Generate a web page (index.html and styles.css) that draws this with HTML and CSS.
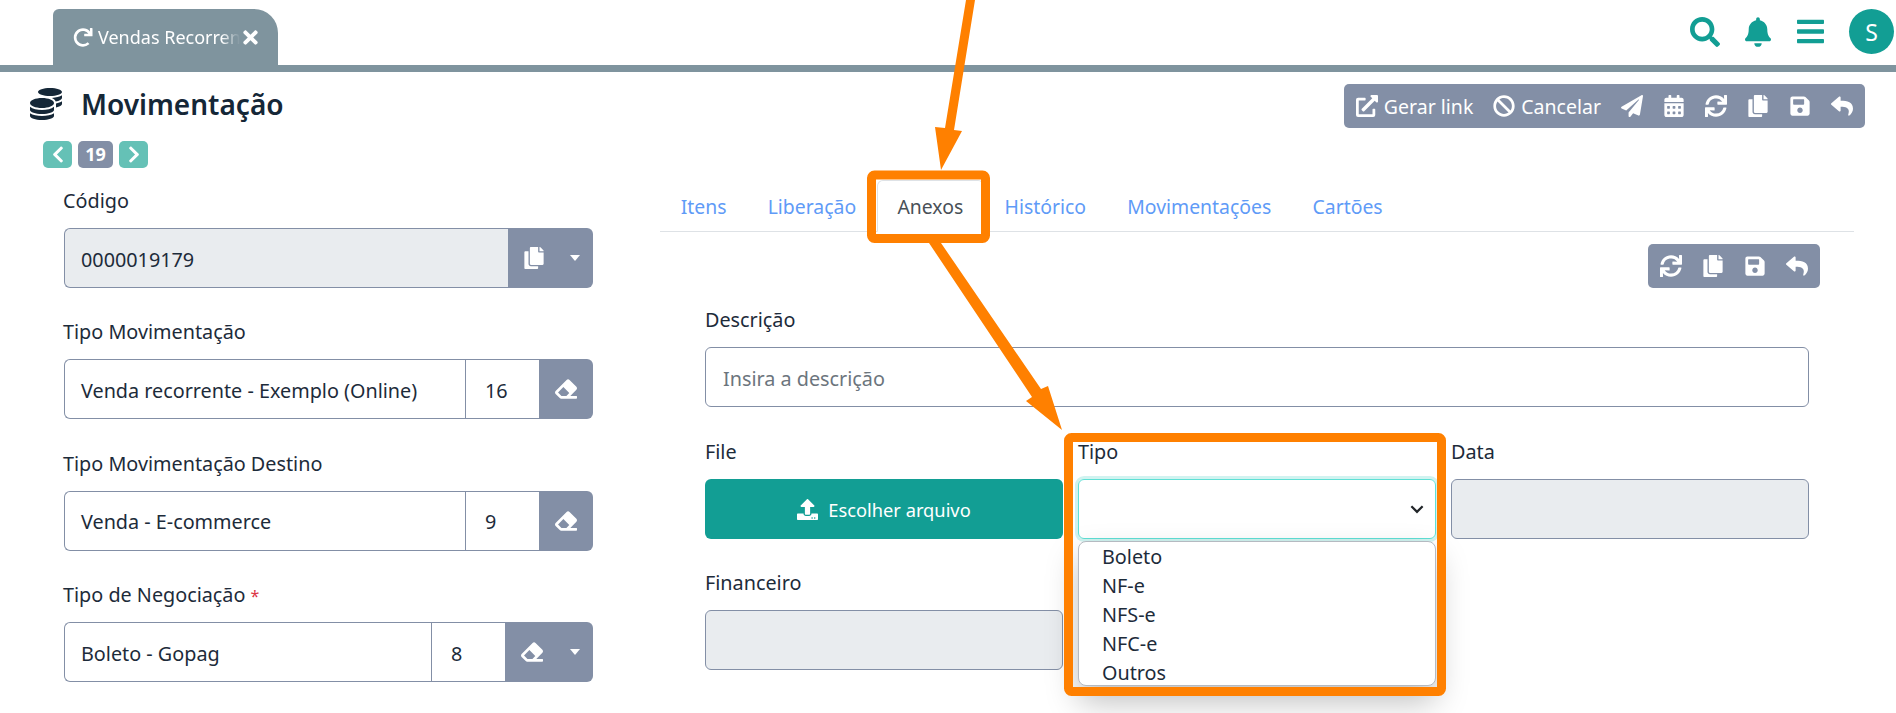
FILE: index.html
```html
<!DOCTYPE html>
<html lang="pt-BR">
<head>
    <meta charset="UTF-8">
    <title>Movimentação</title>
    <link rel="stylesheet" href="styles.css">
</head>
<body>
    <svg class="sprite" xmlns="http://www.w3.org/2000/svg">
        <symbol id="i-search" viewBox="0 0 512 512"><path d="M505 442.7L405.3 343c-4.5-4.5-10.6-7-17-7H372c27.6-35.3 44-79.7 44-128C416 93.1 322.9 0 208 0S0 93.1 0 208s93.1 208 208 208c48.3 0 92.7-16.4 128-44v16.3c0 6.4 2.5 12.5 7 17l99.7 99.7c9.4 9.4 24.6 9.4 33.9 0l28.3-28.3c9.4-9.4 9.4-24.6.1-34zM208 336c-70.7 0-128-57.2-128-128 0-70.7 57.2-128 128-128 70.7 0 128 57.2 128 128 0 70.7-57.2 128-128 128z"/></symbol>
        <symbol id="i-bell" viewBox="0 0 448 512"><path d="M224 512c35.32 0 63.97-28.65 63.97-64H160.03c0 35.35 28.65 64 63.97 64zm215.39-149.71c-19.32-20.76-55.47-51.99-55.47-154.29 0-77.7-54.48-139.9-127.94-155.16V32c0-17.67-14.32-32-31.98-32s-31.98 14.33-31.98 32v20.84C118.56 68.1 64.08 130.3 64.08 208c0 102.3-36.15 133.53-55.47 154.29-6 6.45-8.66 14.16-8.61 21.71.11 16.4 12.98 32 32.1 32h383.8c19.12 0 32-15.6 32.1-32 .05-7.55-2.61-15.27-8.61-21.71z"/></symbol>
        <symbol id="i-bars" viewBox="0 0 448 512"><path d="M16 132h416c8.837 0 16-7.163 16-16V76c0-8.837-7.163-16-16-16H16C7.163 60 0 67.163 0 76v40c0 8.837 7.163 16 16 16zm0 160h416c8.837 0 16-7.163 16-16v-40c0-8.837-7.163-16-16-16H16c-8.837 0-16 7.163-16 16v40c0 8.837 7.163 16 16 16zm0 160h416c8.837 0 16-7.163 16-16v-40c0-8.837-7.163-16-16-16H16c-8.837 0-16 7.163-16 16v40c0 8.837 7.163 16 16 16z"/></symbol>
        <symbol id="i-copy" viewBox="0 0 448 512"><path d="M320 448v40c0 13.255-10.745 24-24 24H24c-13.255 0-24-10.745-24-24V120c0-13.255 10.745-24 24-24h72v296c0 30.879 25.121 56 56 56h168zm0-344V0H152c-13.255 0-24 10.745-24 24v368c0 13.255 10.745 24 24 24h272c13.255 0 24-10.745 24-24V128H344c-13.2 0-24-10.8-24-24zm120.971-31.029L375.029 7.029A24 24 0 0 0 358.059 0H352v96h96v-6.059a24 24 0 0 0-7.029-16.97z"/></symbol>
        <symbol id="i-save" viewBox="0 0 448 512"><path d="M433.941 129.941l-83.882-83.882A48 48 0 0 0 316.118 32H48C21.49 32 0 53.49 0 80v352c0 26.51 21.49 48 48 48h352c26.51 0 48-21.49 48-48V163.882a48 48 0 0 0-14.059-33.941zM224 416c-35.346 0-64-28.654-64-64 0-35.346 28.654-64 64-64s64 28.654 64 64c0 35.346-28.654 64-64 64zm96-304.52V212c0 6.627-5.373 12-12 12H76c-6.627 0-12-5.373-12-12V108c0-6.627 5.373-12 12-12h228.52c3.183 0 6.235 1.264 8.485 3.515l3.48 3.48A11.996 11.996 0 0 1 320 111.48z"/></symbol>
        <symbol id="i-reply" viewBox="0 0 512 512"><path d="M8.309 189.836L184.313 37.851C199.719 24.546 224 35.347 224 56.015v80.053c160.629 1.839 288 34.032 288 186.258 0 61.441-39.581 122.309-83.333 154.132-13.653 9.931-33.111-2.533-28.077-18.631 45.344-145.012-21.507-183.51-176.59-185.742V360c0 20.7-24.3 31.453-39.687 18.164l-176.004-152c-11.071-9.562-11.086-26.753 0-36.328z"/></symbol>
        <symbol id="i-sync" viewBox="0 0 512 512"><path d="M440.65 12.57l4 82.77A247.16 247.16 0 0 0 255.83 8C134.73 8 33.91 94.92 12.29 209.82A12 12 0 0 0 24.09 224h49.05a12 12 0 0 0 11.67-9.26 175.91 175.91 0 0 1 317-56.94l-101.46-4.86a12 12 0 0 0-12.57 12v47.41a12 12 0 0 0 12 12H500a12 12 0 0 0 12-12V12a12 12 0 0 0-12-12h-47.37a12 12 0 0 0-11.98 12.57zM255.83 432a175.61 175.61 0 0 1-146-77.8l101.8 4.87a12 12 0 0 0 12.57-12v-47.4a12 12 0 0 0-12-12H12a12 12 0 0 0-12 12V500a12 12 0 0 0 12 12h47.35a12 12 0 0 0 12-12.6l-4.15-82.57A247.17 247.17 0 0 0 255.83 504c121.11 0 221.93-86.92 243.55-201.82a12 12 0 0 0-11.8-14.18h-49.05a12 12 0 0 0-11.67 9.26A175.86 175.86 0 0 1 255.83 432z"/></symbol>
        <symbol id="i-redo" viewBox="0 0 512 512"><path d="M500.33 0h-47.41a12 12 0 0 0-12 12.57l4 82.76A247.42 247.42 0 0 0 256 8C119.34 8 7.9 119.53 8 256.19 8.1 393.07 119.1 504 256 504a247.1 247.1 0 0 0 166.18-63.91 12 12 0 0 0 .48-17.43l-34-34a12 12 0 0 0-16.38-.55A176 176 0 1 1 402.1 157.8l-101.53-4.87a12 12 0 0 0-12.57 12v47.41a12 12 0 0 0 12 12h200.33a12 12 0 0 0 12-12V12a12 12 0 0 0-12-12z"/></symbol>
        <symbol id="i-times" viewBox="0 0 352 512"><path d="M242.72 256l100.07-100.07c12.28-12.28 12.28-32.19 0-44.48l-22.24-22.24c-12.28-12.28-32.19-12.28-44.48 0L176 189.28 75.93 89.21c-12.28-12.28-32.19-12.28-44.48 0L9.21 111.45c-12.28 12.28-12.28 32.19 0 44.48L109.28 256 9.21 356.07c-12.28 12.28-12.28 32.19 0 44.48l22.24 22.24c12.28 12.28 32.2 12.28 44.48 0L176 322.72l100.07 100.07c12.28 12.28 32.2 12.28 44.48 0l22.24-22.24c12.28-12.28 12.28-32.19 0-44.48L242.72 256z"/></symbol>
        <symbol id="i-plane" viewBox="0 0 512 512"><path d="M476 3.2L12.5 270.6c-18.1 10.4-15.8 35.6 2.2 43.2L121 358.4l287.3-253.2c5.5-4.9 13.3 2.6 8.6 8.3L176 407v80.5c0 23.6 28.5 32.9 42.5 15.8L282 426l124.6 52.2c14.2 6 30.4-2.9 33-18.2l72-432C515 7.8 493.3-6.8 476 3.2z"/></symbol>
        <symbol id="i-calendar" viewBox="0 0 448 512"><path d="M0 464c0 26.5 21.5 48 48 48h352c26.5 0 48-21.5 48-48V192H0v272zm320-196c0-6.6 5.4-12 12-12h40c6.6 0 12 5.4 12 12v40c0 6.6-5.4 12-12 12h-40c-6.6 0-12-5.4-12-12v-40zm0 128c0-6.6 5.4-12 12-12h40c6.6 0 12 5.4 12 12v40c0 6.6-5.4 12-12 12h-40c-6.6 0-12-5.4-12-12v-40zM192 268c0-6.6 5.4-12 12-12h40c6.6 0 12 5.4 12 12v40c0 6.6-5.4 12-12 12h-40c-6.6 0-12-5.4-12-12v-40zm0 128c0-6.6 5.4-12 12-12h40c6.6 0 12 5.4 12 12v40c0 6.6-5.4 12-12 12h-40c-6.6 0-12-5.4-12-12v-40zM64 268c0-6.6 5.4-12 12-12h40c6.6 0 12 5.4 12 12v40c0 6.6-5.4 12-12 12H76c-6.6 0-12-5.4-12-12v-40zm0 128c0-6.6 5.4-12 12-12h40c6.6 0 12 5.4 12 12v40c0 6.6-5.4 12-12 12H76c-6.6 0-12-5.4-12-12v-40zM400 64h-48V16c0-8.8-7.2-16-16-16h-32c-8.8 0-16 7.2-16 16v48H160V16c0-8.8-7.2-16-16-16h-32c-8.8 0-16 7.2-16 16v48H48C21.5 64 0 85.5 0 112v48h448v-48c0-26.5-21.5-48-48-48z"/></symbol>
        <symbol id="i-ban" viewBox="0 0 512 512"><path d="M256 8C119.034 8 8 119.033 8 256s111.034 248 248 248 248-111.034 248-248S392.967 8 256 8zm130.108 117.892c65.448 65.448 70 165.481 20.677 235.637L150.47 105.216c70.204-49.356 170.226-44.735 235.638 20.676zM125.892 386.108c-65.448-65.448-70-165.481-20.677-235.637L361.53 406.784c-70.203 49.356-170.226 44.736-235.638-20.676z"/></symbol>
        <symbol id="i-link" viewBox="0 0 512 512"><path d="M432 320h-32a16 16 0 0 0-16 16v112H64V128h144a16 16 0 0 0 16-16V80a16 16 0 0 0-16-16H48a48 48 0 0 0-48 48v352a48 48 0 0 0 48 48h352a48 48 0 0 0 48-48V336a16 16 0 0 0-16-16zM488 0H360c-21.37 0-32.05 25.91-17 41l35.73 35.73L135 320.37a24 24 0 0 0 0 34L157.67 377a24 24 0 0 0 34 0l243.61-243.68L471 169c15 15 41 4.5 41-17V24a24 24 0 0 0-24-24z"/></symbol>
        <symbol id="i-eraser" viewBox="0 0 512 512"><path d="M497.941 273.941c18.745-18.745 18.745-49.137 0-67.882l-160-160c-18.745-18.745-49.136-18.746-67.883 0l-256 256c-18.745 18.745-18.745 49.137 0 67.882l96 96A48.004 48.004 0 0 0 144 480h356c6.627 0 12-5.373 12-12v-40c0-6.627-5.373-12-12-12H355.883l142.058-142.059zm-302.627-62.627l137.373 137.373L265.373 416H150.628l-80-80 124.686-124.686z"/></symbol>
        <symbol id="i-upload" viewBox="0 0 512 512"><path d="M296 384h-80c-13.3 0-24-10.7-24-24V192h-87.7c-17.8 0-26.7-21.5-14.1-34.1L242.3 5.7c7.5-7.5 19.8-7.5 27.3 0l152.2 152.2c12.6 12.6 3.7 34.1-14.1 34.1H320v168c0 13.3-10.7 24-24 24zm216-8v112c0 13.3-10.7 24-24 24H24c-13.3 0-24-10.7-24-24V376c0-13.3 10.7-24 24-24h136v8c0 30.9 25.1 56 56 56h80c30.9 0 56-25.1 56-56v-8h136c13.3 0 24 10.7 24 24zm-124 88c0-11-9-20-20-20s-20 9-20 20 9 20 20 20 20-9 20-20zm64 0c0-11-9-20-20-20s-20 9-20 20 9 20 20 20 20-9 20-20z"/></symbol>
        <symbol id="i-coins" viewBox="0 0 512 512"><path d="M0 405.3V448c0 35.3 86 64 192 64s192-28.7 192-64v-42.7C342.7 434.4 267.2 448 192 448S41.3 434.4 0 405.3zM320 128c106 0 192-28.7 192-64S426 0 320 0 128 28.7 128 64s86 64 192 64zM0 300.4V352c0 35.3 86 64 192 64s192-28.7 192-64v-51.6c-41.3 34-116.9 51.6-192 51.6S41.3 334.4 0 300.4zm416 11c57.3-11.1 96-31.7 96-55.4v-42.7c-23.2 16.4-57.3 27.6-96 34.5v63.6zM192 160C86 160 0 195.8 0 240s86 80 192 80 192-35.8 192-80-86-80-192-80zm219.3 56.3c60-10.8 100.7-32 100.7-56.3v-42.7c-35.5 25.1-96.5 38.6-160.7 41.8 29.5 14.3 51.2 33.5 60 57.2z"/></symbol>
        <symbol id="i-left" viewBox="0 0 320 512"><path d="M34.52 239.03L228.87 44.69c9.37-9.37 24.57-9.37 33.94 0l22.67 22.67c9.36 9.36 9.37 24.52.04 33.9L131.49 256l154.02 154.75c9.34 9.38 9.32 24.54-.04 33.9l-22.67 22.67c-9.37 9.37-24.57 9.37-33.94 0L34.52 272.97c-9.37-9.37-9.37-24.57 0-33.94z"/></symbol>
        <symbol id="i-right" viewBox="0 0 320 512"><path d="M285.476 272.971L91.132 467.314c-9.373 9.373-24.569 9.373-33.941 0l-22.667-22.667c-9.357-9.357-9.375-24.522-.04-33.901L188.505 256 34.484 101.255c-9.335-9.379-9.317-24.544.04-33.901l22.667-22.667c9.373-9.373 24.569-9.373 33.941 0L285.475 239.03c9.373 9.372 9.373 24.568.001 33.941z"/></symbol>
    </svg>

    <header class="topbar">
        <div class="tab">
            <svg class="icon tab-redo"><use href="#i-redo"/></svg>
            <span class="tab-title">Vendas Recorren</span>
            <svg class="icon tab-close"><use href="#i-times"/></svg>
        </div>
        <div class="top-icons">
            <svg class="icon top-search"><use href="#i-search"/></svg>
            <svg class="icon top-bell"><use href="#i-bell"/></svg>
            <svg class="icon top-bars"><use href="#i-bars"/></svg>
            <div class="avatar">S</div>
        </div>
    </header>

    <main class="page">
        <div class="title-row">
            <div class="title-left">
                <svg class="icon title-icon"><use href="#i-coins"/></svg>
                <h1>Movimentação</h1>
            </div>
            <div class="actions">
                <span class="action"><svg class="icon"><use href="#i-link"/></svg>Gerar link</span>
                <span class="action"><svg class="icon"><use href="#i-ban"/></svg>Cancelar</span>
                <span class="action"><svg class="icon"><use href="#i-plane"/></svg></span>
                <span class="action"><svg class="icon"><use href="#i-calendar"/></svg></span>
                <span class="action"><svg class="icon"><use href="#i-sync"/></svg></span>
                <span class="action"><svg class="icon"><use href="#i-copy"/></svg></span>
                <span class="action"><svg class="icon"><use href="#i-save"/></svg></span>
                <span class="action"><svg class="icon"><use href="#i-reply"/></svg></span>
            </div>
        </div>

        <div class="pager">
            <span class="pager-btn"><svg class="icon"><use href="#i-left"/></svg></span>
            <span class="pager-count">19</span>
            <span class="pager-btn"><svg class="icon"><use href="#i-right"/></svg></span>
        </div>

        <div class="columns">
            <section class="left-col">
                <div class="field">
                    <label>Código</label>
                    <div class="input-group">
                        <div class="input disabled grow">0000019179</div>
                        <div class="addon addon-wide addon-copy">
                            <svg class="icon"><use href="#i-copy"/></svg>
                            <span class="caret"></span>
                        </div>
                    </div>
                </div>
                <div class="field">
                    <label>Tipo Movimentação</label>
                    <div class="input-group">
                        <div class="input grow">Venda recorrente - Exemplo (Online)</div>
                        <div class="input code">16</div>
                        <div class="addon"><svg class="icon"><use href="#i-eraser"/></svg></div>
                    </div>
                </div>
                <div class="field">
                    <label>Tipo Movimentação Destino</label>
                    <div class="input-group">
                        <div class="input grow">Venda - E-commerce</div>
                        <div class="input code">9</div>
                        <div class="addon"><svg class="icon"><use href="#i-eraser"/></svg></div>
                    </div>
                </div>
                <div class="field">
                    <label>Tipo de Negociação <span class="required">*</span></label>
                    <div class="input-group">
                        <div class="input grow">Boleto - Gopag</div>
                        <div class="input code">8</div>
                        <div class="addon addon-wide">
                            <svg class="icon"><use href="#i-eraser"/></svg>
                            <span class="caret"></span>
                        </div>
                    </div>
                </div>
            </section>

            <section class="right-col">
                <nav class="tabs">
                    <a>Itens</a>
                    <a>Liberação</a>
                    <a class="active">Anexos</a>
                    <a>Histórico</a>
                    <a>Movimentações</a>
                    <a>Cartões</a>
                </nav>
                <div class="sub-actions">
                    <div class="actions">
                        <span class="action"><svg class="icon"><use href="#i-sync"/></svg></span>
                        <span class="action"><svg class="icon"><use href="#i-copy"/></svg></span>
                        <span class="action"><svg class="icon"><use href="#i-save"/></svg></span>
                        <span class="action"><svg class="icon"><use href="#i-reply"/></svg></span>
                    </div>
                </div>
                <div class="attach-form">
                    <div class="field field-full">
                        <label>Descrição</label>
                        <div class="input placeholder">Insira a descrição</div>
                    </div>
                    <div class="field">
                        <label>File</label>
                        <div class="file-btn"><svg class="icon"><use href="#i-upload"/></svg>Escolher arquivo</div>
                    </div>
                    <div class="field field-select">
                        <label>Tipo</label>
                        <div class="select">
                            <svg class="select-arrow" viewBox="0 0 16 16"><path d="M3 5.5l5 5 5-5" fill="none" stroke="#212529" stroke-width="2"/></svg>
                        </div>
                        <ul class="options">
                            <li>Boleto</li>
                            <li>NF-e</li>
                            <li>NFS-e</li>
                            <li>NFC-e</li>
                            <li>Outros</li>
                        </ul>
                    </div>
                    <div class="field">
                        <label>Data</label>
                        <div class="input disabled"></div>
                    </div>
                    <div class="field">
                        <label>Financeiro</label>
                        <div class="input disabled"></div>
                    </div>
                </div>
            </section>
        </div>
    </main>

    <!-- marcacoes laranja por cima do print -->
    <svg class="marks" width="1896" height="713" viewBox="0 0 1896 713">
        <polygon points="966,0 975,0 954,130 962,131 941,170 935,127 945,128"/>
        <polygon points="929,243 941,243 1041,389 1048,386 1062,430 1026,401 1032,397"/>
        <rect x="871.5" y="175" width="114" height="63.5" rx="3"/>
        <rect x="1068.5" y="437.5" width="373" height="254" rx="3"/>
    </svg>
</body>
</html>
```

FILE: styles.css
```css
* {
    box-sizing: border-box;
}
body {
    margin: 0;
    height: 713px;
    overflow: hidden;
    position: relative;
    background: #fff;
    color: #1d2b3a;
    font-family: "Noto Sans", Arial, sans-serif;
    font-size: 19.8px;
}
.sprite {
    display: none;
}
.icon {
    display: block;
    fill: currentColor;
    width: 22px;
    height: 22px;
    flex-shrink: 0;
}

/* topo */
.topbar {
    height: 72px;
    border-bottom: 7px solid #7f949e;
    padding-left: 53px;
    display: flex;
    justify-content: space-between;
    align-items: flex-end;
}
.tab {
    width: 225px;
    height: 56px;
    background: #7f949e;
    border-radius: 6px 24px 0 0;
    color: #fff;
    padding-left: 20px;
    display: flex;
    align-items: center;
    font-size: 18px;
}
.tab-redo {
    width: 20px;
    height: 19px;
    margin-right: 5px;
}
.tab-title {
    width: 145px;
    white-space: nowrap;
    -webkit-mask-image: linear-gradient(to right, #000 85%, transparent 98%);
    mask-image: linear-gradient(to right, #000 85%, transparent 98%);
}
.tab-close {
    width: 15px;
    height: 21px;
}
.top-icons {
    display: flex;
    align-items: center;
    align-self: flex-start;
    color: #129e94;
    height: 63px;
    padding-right: 2px;
}
.top-search {
    width: 30px;
    height: 30px;
}
.top-bell {
    width: 26px;
    height: 30px;
    margin-left: 25px;
}
.top-bars {
    width: 27px;
    height: 31px;
    margin-left: 26px;
}
.avatar {
    width: 45px;
    height: 45px;
    margin-left: 25px;
    border-radius: 50%;
    background: #129e94;
    color: #fff;
    font-size: 23px;
    display: flex;
    align-items: center;
    justify-content: center;
}

/* titulo */
.page {
    padding: 0 30px;
}
.title-row {
    display: flex;
    justify-content: space-between;
    align-items: flex-start;
    height: 68px;
}
.title-left {
    display: flex;
    align-items: center;
    padding-top: 14px;
}
.title-icon {
    width: 32px;
    height: 32px;
    color: #152737;
}
h1 {
    margin: 0 0 0 19px;
    font-size: 28px;
    font-weight: 600;
    line-height: 36px;
    color: #152737;
}
.actions {
    display: flex;
    align-items: center;
    height: 44px;
    background: #838fa6;
    border-radius: 5px;
    color: #fff;
    padding: 0 12px;
    gap: 20px;
    font-size: 19.5px;
}
.title-row .actions {
    margin-top: 12px;
    margin-right: 1px;
}
.action {
    display: flex;
    align-items: center;
    gap: 6px;
    white-space: nowrap;
}
.pager {
    display: flex;
    gap: 6px;
    padding-left: 13px;
    height: 28px;
    align-items: center;
    font-size: 18px;
}
.pager-btn {
    width: 29px;
    height: 27px;
    background: #65c1b6;
    border-radius: 5px;
    color: #fff;
    display: flex;
    align-items: center;
    justify-content: center;
}
.pager-btn .icon {
    width: 14px;
    height: 19px;
}
.pager-count {
    width: 35px;
    height: 27px;
    background: #838fa6;
    border-radius: 5px;
    color: #fff;
    font-weight: 700;
    text-align: center;
    line-height: 26px;
}

/* colunas */
.columns {
    display: flex;
    gap: 67px;
    padding-left: 34px;
}
.left-col {
    width: 529px;
    padding-top: 19px;
}
.right-col {
    width: 1194px;
}
label {
    display: block;
    height: 27px;
    line-height: 27px;
    margin-bottom: 14px;
    white-space: nowrap;
}
.left-col label {
    margin-left: -1px;
}
.left-col .field {
    margin-bottom: 30.4px;
}
.required {
    color: #dc3545;
    font-size: 16px;
}
.input-group {
    display: flex;
    height: 60px;
}
.input {
    height: 60px;
    border: 1px solid #838fa6;
    border-radius: 6px;
    padding: 2px 17px 0;
    display: flex;
    align-items: center;
    background: #fff;
    white-space: nowrap;
}
.disabled {
    background: #e9ecef;
}
.placeholder {
    color: #6c757d;
}
.input-group .input {
    border-radius: 0;
    border-right: 0;
}
.input-group .grow {
    flex: 1;
    min-width: 0;
    padding: 2px 16px 0;
    border-radius: 6px 0 0 6px;
}
.input-group .code {
    width: 74px;
    padding: 2px 19px 0;
}
.addon {
    width: 54px;
    background: #838fa6;
    border-radius: 0 6px 6px 0;
    color: #fff;
    display: flex;
    align-items: center;
    justify-content: center;
}
.addon-wide {
    width: 88px;
    justify-content: space-between;
    padding: 0 13px 0 16px;
}
.addon-copy {
    width: 85px;
    padding-left: 15px;
}
.caret {
    width: 0;
    height: 0;
    border-left: 5px solid transparent;
    border-right: 5px solid transparent;
    border-top: 6px solid #fff;
}

/* abas */
.tabs {
    display: flex;
    height: 64px;
    padding-top: 12px;
    border-bottom: 1px solid #dee2e6;
    color: #5f9bf7;
    font-size: 19.4px;
    line-height: 52px;
}
.tabs a {
    padding: 0 19.65px;
    height: 52px;
    border: 1px solid transparent;
    border-radius: 6px 6px 0 0;
}
.tabs .active {
    color: #495057;
    background: #fff;
    border-color: #dee2e6 #dee2e6 #fff;
}
.sub-actions {
    display: flex;
    justify-content: flex-end;
    padding-right: 34px;
    padding-top: 12px;
    height: 74px;
}
.attach-form {
    display: grid;
    grid-template-columns: repeat(3, 358px);
    column-gap: 15px;
    row-gap: 30px;
    padding-left: 45px;
    width: 1149px;
}
.attach-form .field-full {
    grid-column: 1 / 4;
    margin-bottom: 1px;
}
.field-select {
    position: relative;
}
.file-btn {
    height: 60px;
    background: #129e94;
    border-radius: 6px;
    color: #fff;
    display: flex;
    align-items: center;
    justify-content: center;
    gap: 10px;
    font-size: 18.3px;
}
.file-btn .icon {
    width: 21px;
    height: 21px;
}
.select {
    height: 60px;
    border: 1px solid #5fe0d5;
    border-radius: 6px;
    box-shadow: 0 0 0 3px #d0f3f0;
    display: flex;
    align-items: center;
    justify-content: flex-end;
    padding-right: 9px;
}
.select-arrow {
    width: 18px;
    height: 18px;
}
.options {
    position: absolute;
    z-index: 2;
    left: 0;
    right: 0;
    top: 103px;
    height: 145px;
    margin: 0;
    padding: 0 0 0 23px;
    list-style: none;
    background: #fff;
    border: 1px solid #b5bac1;
    border-radius: 8px;
    box-shadow: 0 16px 32px rgba(0, 0, 0, 0.25);
    line-height: 29px;
}

.marks {
    position: absolute;
    left: 0;
    top: 0;
    z-index: 5;
    pointer-events: none;
}
.marks polygon {
    fill: #ff8000;
}
.marks rect {
    fill: none;
    stroke: #ff8000;
    stroke-width: 9;
}
```
